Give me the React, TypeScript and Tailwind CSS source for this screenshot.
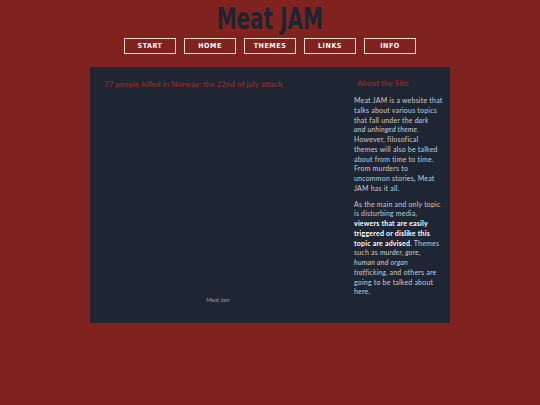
const navItems = ["START", "HOME", "THEMES", "LINKS", "INFO"];

export default function App() {
  return (
    <div className="min-h-[405px] w-full bg-[#80231e] font-['Lato','Open_Sans',sans-serif]">
      <header className="flex flex-col items-center pt-[2px]">
        <h1 className="text-[30px] leading-[34px] font-bold text-[#1c2432] font-['DejaVu_Sans_Condensed','DejaVu_Sans',sans-serif] [transform:scaleX(0.74)]">
          Meat JAM
        </h1>
        <nav className="mt-[2px] flex gap-[8px]">
          {navItems.map((item) => (
            <a
              key={item}
              href="#"
              className="flex h-[16px] w-[52px] items-center justify-center border border-[#f1d6d2] text-[7px] font-bold tracking-[0.6px] text-white font-['DejaVu_Sans_Condensed','DejaVu_Sans',sans-serif]"
            >
              {item}
            </a>
          ))}
        </nav>
      </header>

      <main className="mx-auto mt-[13px] flex h-[256px] w-[360px] bg-[#1d2632]">
        <section className="flex flex-1 flex-col px-[14px] pt-[11px]">
          <h2 className="text-[8px] font-bold text-[#8b2b24]">
            77 people killed in Norway: the 22nd of july attack
          </h2>
          <footer className="mt-auto mb-[19px] pr-[8px] text-center text-[5.5px] text-[#9aa0a8]">
            Meat Jam
          </footer>
        </section>

        <aside className="mr-[6px] w-[90px] pt-[11px] whitespace-nowrap text-[7px] leading-[9.75px] tracking-[0.2px] text-[#c9ccd1]">
          <h3 className="pl-[3px] text-[8px] font-bold leading-[10px] tracking-normal text-[#8b2b24]">
            About the Site
          </h3>
          <p className="mt-[8px]">
            Meat JAM is a website that
            <br />
            talks about various topics
            <br />
            that fall under the <em>dark</em>
            <br />
            <em>and unhinged theme</em>.
            <br />
            However, filosofical
            <br />
            themes will also be talked
            <br />
            about from time to time.
            <br />
            From murders to
            <br />
            uncommon stories, Meat
            <br />
            JAM has it all.
          </p>
          <p className="mt-[6px]">
            As the main and only topic
            <br />
            is disturbing media,
            <br />
            <strong className="text-white">
              viewers that are easily
              <br />
              triggered or dislike this
              <br />
              topic are advised
            </strong>
            . Themes
            <br />
            such as <em>murder, gore,</em>
            <br />
            <em>human and organ</em>
            <br />
            <em>trafficking</em>, and others are
            <br />
            going to be talked about
            <br />
            here.
          </p>
        </aside>
      </main>
    </div>
  );
}
